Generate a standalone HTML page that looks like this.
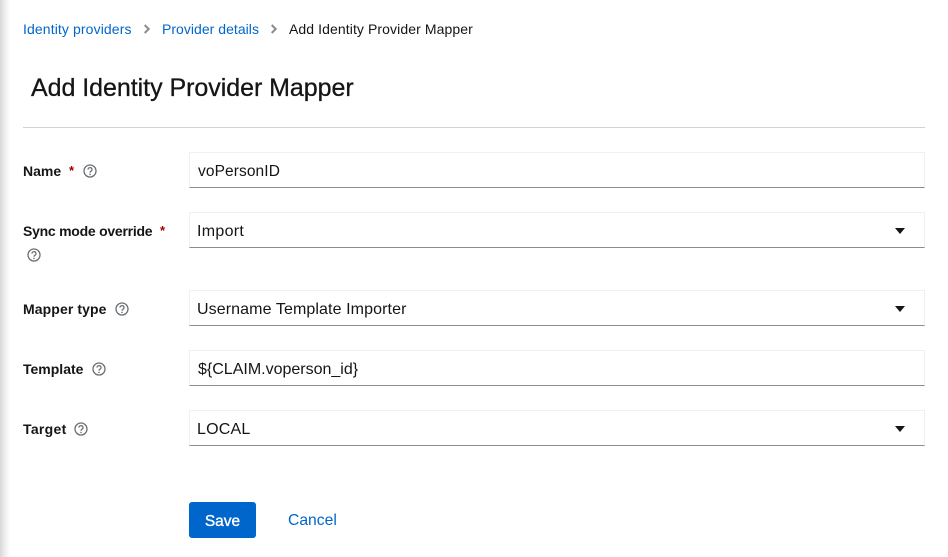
<!DOCTYPE html>
<html lang="en"><head><meta charset="utf-8"><title>Add Identity Provider Mapper</title>
<style>
html,body{margin:0;padding:0;background:#fff}
body{width:948px;height:557px;position:relative;overflow:hidden;font-family:"Liberation Sans",sans-serif;color:#151515}
#shadow{position:absolute;left:0;top:0;width:10px;height:557px;background:linear-gradient(to right,#d8d8d8,#eeeeee 50%,#fff)}
.t{position:absolute;white-space:nowrap;line-height:20px;font-size:14px}
.l{color:#0066cc}
.b{font-weight:bold;font-size:14px;color:#151515}
.r{color:#a30000;font-size:13px;font-weight:bold}
.box{position:absolute;left:189px;width:736px;height:36px;box-sizing:border-box;border:1px solid #f0f0f0;border-bottom:1px solid #8a8d90;background:#fff}
.v{position:absolute;left:197px;white-space:nowrap;line-height:20px;font-size:16px;color:#151515}
.h{position:absolute;width:14px;height:14px}
.c{position:absolute;left:896px;width:0;height:0;border-left:5.5px solid transparent;border-right:5.5px solid transparent;border-top:6px solid #151515}
#rule{position:absolute;left:23px;top:127px;width:902px;height:1px;background:#d2d2d2}
#save{position:absolute;left:189px;top:502px;width:67px;height:36px;background:#0066cc;border-radius:3px;color:#fff;font-size:15.5px;text-align:center;line-height:40px;-webkit-text-stroke:.35px #fff}
svg.s{position:absolute;width:8px;height:12px}
</style></head><body>
<div id="shadow"></div>

<div class="t l" style="left:23px;top:19px;letter-spacing:.11px">Identity providers</div>
<svg class="s" style="left:143px;top:23px" viewBox="0 0 8 12"><path d="M1.700 2 5.700 6 1.700 10" fill="none" stroke="#8a8d90" stroke-width="2"/></svg>
<div class="t l" style="left:162px;top:19px;letter-spacing:.03px">Provider details</div>
<svg class="s" style="left:270px;top:23px" viewBox="0 0 8 12"><path d="M1.700 2 5.700 6 1.700 10" fill="none" stroke="#8a8d90" stroke-width="2"/></svg>
<div class="t" style="left:289px;top:19px;letter-spacing:.09px">Add Identity Provider Mapper</div>

<div class="t" style="left:31px;top:73px;font-size:25px;line-height:30px;letter-spacing:-.04px;-webkit-text-stroke:.3px #151515">Add Identity Provider Mapper</div>
<div id="rule"></div>

<div class="t b" style="left:23px;top:161px">Name</div>
<div class="t r" style="left:69px;top:161px">*</div>
<svg class="h" style="left:83px;top:164px" viewBox="0 0 14 14"><circle cx="7" cy="7" r="6" fill="none" stroke="#6a6e73" stroke-width="1.300"/><path d="M5 5.600a2 1.900 0 1 1 3 1.600c-.7.400-1 .7-1 1.500" fill="none" stroke="#6a6e73" stroke-width="1.200"/><circle cx="7" cy="10.400" r=".8" fill="#6a6e73"/></svg>
<div class="box" style="top:152px"></div>
<div class="v" style="left:198px;top:162px;font-size:15.500px;letter-spacing:.1px">voPersonID</div>

<div class="t b" style="left:23px;top:221px;letter-spacing:-.25px">Sync mode override</div>
<div class="t r" style="left:160px;top:221px">*</div>
<svg class="h" style="left:27px;top:248px" viewBox="0 0 14 14"><circle cx="7" cy="7" r="6" fill="none" stroke="#6a6e73" stroke-width="1.300"/><path d="M5 5.600a2 1.900 0 1 1 3 1.600c-.7.400-1 .7-1 1.500" fill="none" stroke="#6a6e73" stroke-width="1.200"/><circle cx="7" cy="10.400" r=".8" fill="#6a6e73"/></svg>
<div class="box" style="top:212px"></div>
<div class="v" style="top:222px;letter-spacing:.3px">Import</div>
<div class="c" style="top:228px;left:895px"></div>

<div class="t b" style="left:23px;top:299px;letter-spacing:.1px">Mapper type</div>
<svg class="h" style="left:115px;top:302px" viewBox="0 0 14 14"><circle cx="7" cy="7" r="6" fill="none" stroke="#6a6e73" stroke-width="1.300"/><path d="M5 5.600a2 1.900 0 1 1 3 1.600c-.7.400-1 .7-1 1.500" fill="none" stroke="#6a6e73" stroke-width="1.200"/><circle cx="7" cy="10.400" r=".8" fill="#6a6e73"/></svg>
<div class="box" style="top:290px"></div>
<div class="v" style="top:300px;letter-spacing:.1px">Username Template Importer</div>
<div class="c" style="top:306px;left:895px"></div>

<div class="t b" style="left:23px;top:359px">Template</div>
<svg class="h" style="left:92px;top:362px" viewBox="0 0 14 14"><circle cx="7" cy="7" r="6" fill="none" stroke="#6a6e73" stroke-width="1.300"/><path d="M5 5.600a2 1.900 0 1 1 3 1.600c-.7.400-1 .7-1 1.500" fill="none" stroke="#6a6e73" stroke-width="1.200"/><circle cx="7" cy="10.400" r=".8" fill="#6a6e73"/></svg>
<div class="box" style="top:350px"></div>
<div class="v" style="left:198px;top:360px">${CLAIM.voperson_id}</div>

<div class="t b" style="left:23px;top:419px;letter-spacing:.3px">Target</div>
<svg class="h" style="left:74px;top:422px" viewBox="0 0 14 14"><circle cx="7" cy="7" r="6" fill="none" stroke="#6a6e73" stroke-width="1.300"/><path d="M5 5.600a2 1.900 0 1 1 3 1.600c-.7.400-1 .7-1 1.500" fill="none" stroke="#6a6e73" stroke-width="1.200"/><circle cx="7" cy="10.400" r=".8" fill="#6a6e73"/></svg>
<div class="box" style="top:410px"></div>
<div class="v" style="top:420px;letter-spacing:.2px">LOCAL</div>
<div class="c" style="top:426px;left:895px"></div>

<div id="save">Save</div>
<div class="t l" style="left:288px;top:511px;font-size:15.700px">Cancel</div>
</body></html>
